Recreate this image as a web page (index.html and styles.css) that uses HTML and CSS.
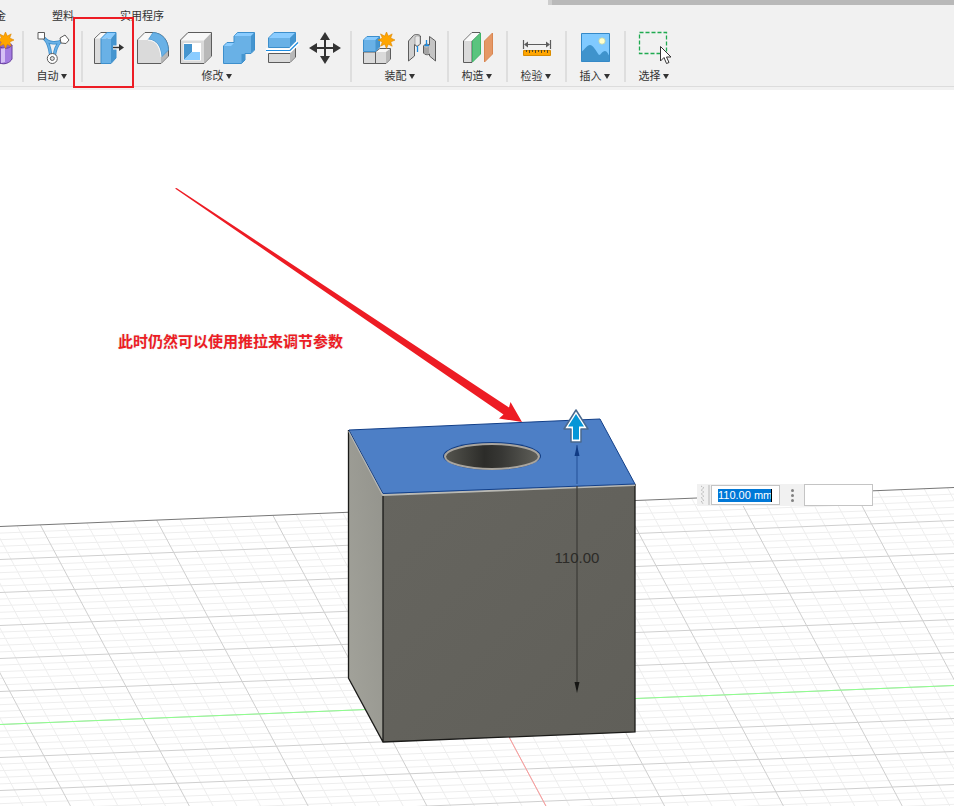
FILE: index.html
```
<!DOCTYPE html>
<html lang="zh-CN">
<head>
  <meta charset="UTF-8" />
  <meta name="viewport" content="width=device-width, initial-scale=1.0"/>
  <title>推拉</title>
  <link rel="stylesheet" href="styles.css">
</head>
<body>
  <header class="ribbon">
    <div class="doc-strip"></div>
    <nav class="tabs">
      <button class="tab">金</button>
      <button class="tab">塑料</button>
      <button class="tab">实用程序</button>
    </nav>

    <div class="toolbar">
      <!-- Create (scrolled out on the left) -->
      <div class="group group-first">
        <div class="tools">
          <button class="tool" aria-label="创建造型">
            <svg viewBox="0 0 32 32">
              <path d="M8 12 L20 8 L32 12 V27 L25 32 H10 L4 27 Z" fill="#8f66c4"/>
              <path d="M20 15 C27 18 31 15 32 13 V27 C30 31 24 33 20 31 Z" fill="#a37be0" stroke="#67409c"/>
              <path d="M21 17 L25 16 V30 L21 31 Z" fill="#d5c0f5"/>
              <path d="M25.500 0 L27.300 4.100 L31.200 1.900 L29.700 6 L34 8 L29.700 10 L31.200 14.200 L27.300 12.200 L25.500 16.500 L23.700 12.200 L19.500 14.200 L21.400 10 L17 8 L21.400 6 L19.500 1.900 L23.700 4.100 Z" fill="#ffa500" stroke="#dc8700" stroke-width=".6"/>
            </svg>
          </button>
        </div>
      </div>

      <!-- Automate -->
      <div class="group">
        <div class="tools">
          <button class="tool" aria-label="自动建模">
            <svg viewBox="0 0 32 32">
              <path d="M7 6 C11 12 21 12 26 8 M8 7 C13 13 13 19 14 25 M25 8 C19 13 18 19 17 25" fill="none" stroke="#3d8fcc" stroke-width="3.400"/>
              <path d="M7 6 C11 12 21 12 26 8 M8 7 C13 13 13 19 14 25 M25 8 C19 13 18 19 17 25" fill="none" stroke="#69b1e6" stroke-width="1.800"/>
              <path d="M1 .5 H7.500 V7 H1 Z M23 6 L28 3 L32 8 L29 11.500 L24 11 Z" fill="#fff" stroke="#5c5c5c"/>
              <circle cx="15.300" cy="26.500" r="5" fill="#fff" stroke="#5c5c5c"/>
              <circle cx="15.300" cy="26.500" r="2" fill="#ddd" stroke="#5c5c5c"/>
            </svg>
          </button>
        </div>
        <button class="menu">自动<i class="caret"></i></button>
      </div>

      <!-- Modify -->
      <div class="group group-wide">
        <div class="tools">
          <button class="tool" aria-label="推拉">
            <svg viewBox="0 0 32 32">
              <path d="M.5 6.500 L7 .5 H13 V31.500 H.5 Z" fill="#dcdcdc" stroke="#5c5c5c"/>
              <path d="M1 6.500 L7 1 H13 L8 6.500 Z" fill="#fafafa"/>
              <path d="M7 6.500 H17 V31.500 H7 Z" fill="#69b1e6"/>
              <path d="M7 6.500 L13 .5 H22 L17 6.500 Z" fill="#8accff"/>
              <path d="M17 6.500 L22 .5 V26 L17 31.500 Z" fill="#4595cf"/>
              <path d="M7 31.500 V6.500 L13 .5 H22 V26 L17 31.500 Z" fill="none" stroke="#3d8fcc"/>
              <path d="M19 15.500 H25" stroke="#fff" stroke-width="4"/>
              <path d="M19 15.500 H26" stroke="#333" stroke-width="1.500"/>
              <path d="M25 12 L30 15.500 L25 19 Z" fill="#333"/>
            </svg>
            <span class="mark"></span>
          </button>
          <button class="tool" aria-label="圆角">
            <svg viewBox="0 0 32 32">
              <path d="M.5 8 L8 .5 H15 C26 1 31 8 31.500 18 V24 L24 31.500 H.5 Z" fill="#dadada" stroke="#5c5c5c"/>
              <path d="M1 8 L8 1 H17 L10 8 Z" fill="#f8f8f8"/>
              <path d="M24 25 L31 18 V24 L24 31 Z" fill="#b8b8b8"/>
              <path d="M11.500 7.500 L16 .5 C26 1 31 9 31.500 18 L24.500 25 C24 14 20 8 11.500 7.500 Z" fill="#69b1e6" stroke="#3d8fcc" stroke-width=".7"/>
              <path d="M11 8 C19 8.500 23 14 24 25" fill="none" stroke="#fff"/>
            </svg>
          </button>
          <button class="tool" aria-label="抽壳">
            <svg viewBox="0 0 32 32">
              <path d="M.5 8 L8 .5 H31.500 V24 L24 31.500 H.5 Z" fill="#dadada" stroke="#5c5c5c"/>
              <path d="M1 8.500 L8.500 1 H31 L24 8.500 Z" fill="#f8f8f8"/>
              <path d="M24 8.500 L31 1.500 V24 L24 31 Z" fill="#b8b8b8"/>
              <path d="M3.500 11 H21 V28.500 H3.500 Z" fill="#fff"/>
              <path d="M4 12 H12 V20 L4 28 Z" fill="#4595cf"/>
              <path d="M4 28 L12 20 H20 V28 Z" fill="#8accff"/>
            </svg>
          </button>
          <button class="tool" aria-label="合并">
            <svg viewBox="0 0 32 32">
              <path d="M.5 14 L4 10.500 H11 V4 L14.500 .5 H31.500 V18 L28 21.500 H22 V28 L18.500 31.500 H.5 Z" fill="#69b1e6" stroke="#3d8fcc"/>
              <path d="M11 4 L14.500 1 H31 L28 4 Z M1 14 L4 11 H11 L8 14 Z" fill="#8accff"/>
              <path d="M28 4 L31 1 V18 L28 21 Z M18.500 22 H22 V28 L18.500 31 Z" fill="#4595cf"/>
            </svg>
          </button>
          <button class="tool" aria-label="分割实体">
            <svg viewBox="0 0 32 32">
              <path d="M2.500 6 L8 .5 H29.500 V10 L24 15.500 H2.500 Z" fill="#69b1e6" stroke="#3d8fcc"/>
              <path d="M3 6 L8 1 H29 L24 6 Z" fill="#8accff"/>
              <path d="M24 6 L29 1 V10 L24 15 Z" fill="#4595cf"/>
              <path d="M2.500 21.500 H24 L29.500 16 V25 L24 30.500 H2.500 Z" fill="#dadada" stroke="#5c5c5c"/>
              <path d="M24 21.500 L29 17 V25 L24 30 Z" fill="#b8b8b8"/>
              <path d="M0 18.500 H24 L32 10.500" fill="none" stroke="#fff" stroke-width="4.500"/>
              <path d="M0 18.500 H24 L32 10.500" fill="none" stroke="#1b8be0" stroke-width="1.200"/>
            </svg>
          </button>
          <button class="tool" aria-label="移动">
            <svg viewBox="0 0 32 32">
              <path d="M16 6 V26 M6 16 H26" stroke="#333" stroke-width="2"/>
              <path d="M16 0 L21 8 H11 Z M16 32 L11 24 H21 Z M0 16 L8 11 V21 Z M32 16 L24 21 V11 Z" fill="#333"/>
            </svg>
          </button>
        </div>
        <button class="menu">修改<i class="caret"></i></button>
      </div>

      <!-- Assemble -->
      <div class="group group-wide">
        <div class="tools">
          <button class="tool" aria-label="新建零部件">
            <svg viewBox="0 0 32 32">
              <path d="M.5 20 H12.500 L17 16.500 H27.500 V27 L23 31.500 H.5 Z" fill="#dadada" stroke="#5c5c5c"/>
              <path d="M13 20 L17 17 H27 L23 20 Z" fill="#f8f8f8"/>
              <path d="M23 20 L27 17 V27 L23 31 Z" fill="#b8b8b8"/>
              <path d="M12.500 19 V31" stroke="#5c5c5c"/>
              <path d="M.5 8 L4 4.500 H16.500 V15 L12.500 19.500 H.5 Z" fill="#69b1e6" stroke="#3d8fcc"/>
              <path d="M1 8 L4 5 H16 L12.500 8 Z" fill="#8accff"/>
              <path d="M12.500 8 L16 5 V15 L12.500 19 Z" fill="#4595cf"/>
              <path d="M23.500 0 L25.300 4.100 L29.200 1.900 L27.700 6 L32 8 L27.700 10 L29.200 14.200 L25.300 12.200 L23.500 16.500 L21.700 12.200 L17.500 14.200 L19.400 10 L15 8 L19.400 6 L17.500 1.900 L21.700 4.100 Z" fill="#ffa500" stroke="#dc8700" stroke-width=".6"/>
            </svg>
          </button>
          <button class="tool" aria-label="联接">
            <svg viewBox="0 0 32 32">
              <path d="M2.500 9 L7 4 C8 2 13 2 14.500 4 V12 L11 14.500 L8.500 12.500 V24 L2.500 29 Z" fill="#d0d0d0" stroke="#5c5c5c"/>
              <path d="M9 5 C10 3.500 13 3.500 14 5 V12 L11 14 L9 12 Z" fill="#e8e8e8" stroke="#8a8a8a" stroke-width=".6"/>
              <path d="M29.500 29 L23.500 24 V22 C21 23.500 18.500 22.500 17.500 21 V14 C18.500 12 21 11.500 23.500 13 V4.500 L29.500 9 Z" fill="#c4c4c4" stroke="#5c5c5c"/>
              <path d="M18 14.500 C19 16 22 16 23 14.500 V21 C21 23 19 22 18 21 Z" fill="#a5a5a5"/>
              <path d="M11.500 14 V20 M20.500 8 V13.500 M18.500 13.500 H23" stroke="#1b8be0" stroke-width="1.300"/>
            </svg>
          </button>
        </div>
        <button class="menu">装配<i class="caret"></i></button>
      </div>

      <!-- Construct -->
      <div class="group">
        <div class="tools">
          <button class="tool" aria-label="偏移平面">
            <svg viewBox="0 0 32 32">
              <path d="M1.500 9 L10 .5 H18 L10 9 V30.500 H1.500 Z" fill="#dadada" stroke="#5c5c5c"/>
              <path d="M2 9 L10 1 H18 L10 9 Z" fill="#fafafa"/>
              <path d="M10.500 9 L18.500 1 V22 L10.500 30 Z" fill="#5ac47e" stroke="#3eb468"/>
              <path d="M22.500 9 L30.500 1 V22 L22.500 30 Z" fill="#e59866" stroke="#d98650"/>
            </svg>
          </button>
        </div>
        <button class="menu">构造<i class="caret"></i></button>
      </div>

      <!-- Inspect -->
      <div class="group">
        <div class="tools">
          <button class="tool" aria-label="测量">
            <svg viewBox="0 0 32 32">
              <path d="M2.500 8 V17 M29.500 8 V17 M5 12.500 H27" stroke="#5c5c5c" stroke-width="1.200"/>
              <path d="M3 12.500 L7 9.500 V15.500 Z M29 12.500 L25 9.500 V15.500 Z" fill="#5c5c5c"/>
              <path d="M2.500 18.500 H29.500 V23.500 H2.500 Z" fill="#ffa500" stroke="#d98c00"/>
              <path d="M5.500 18 V20 M8.500 18 V21 M11.500 18 V20 M14.500 18 V21 M17.500 18 V20 M20.500 18 V21 M23.500 18 V20 M26.500 18 V21" stroke="#5c4a20"/>
            </svg>
          </button>
        </div>
        <button class="menu">检验<i class="caret"></i></button>
      </div>

      <!-- Insert -->
      <div class="group">
        <div class="tools">
          <button class="tool" aria-label="画布">
            <svg viewBox="0 0 32 32">
              <path d="M1.500 1.500 H29.500 V29.500 H1.500 Z" fill="#80caff"/>
              <path d="M1.500 20 C5 17 7 13 10 13 C13 13 16 19 19 23 C21 23 22 19 25 19 C27 19 28 22 29.500 24 V29.500 H1.500 Z" fill="#3f93cc"/>
              <path d="M1.500 1.500 H29.500 V29.500 H1.500 Z" fill="none" stroke="#3589c7"/>
              <circle cx="22" cy="9" r="3.200" fill="#ffffcc" stroke="#b8cfa0" stroke-width=".7"/>
            </svg>
          </button>
        </div>
        <button class="menu">插入<i class="caret"></i></button>
      </div>

      <!-- Select -->
      <div class="group">
        <div class="tools">
          <button class="tool" aria-label="选择">
            <svg viewBox="0 0 32 32">
              <path d="M.5 .5 H27.500 V21.500 H.5 Z" fill="none" stroke="#1faa50" stroke-width="1.300" stroke-dasharray="4 2"/>
              <path d="M21.500 14.500 V29 L25 25.500 L27.500 31.500 L30 30.500 L27.500 25 H32 Z" fill="#fff" stroke="#333"/>
            </svg>
          </button>
        </div>
        <button class="menu">选择<i class="caret"></i></button>
      </div>
    </div>
  </header>

  <main class="viewport">
    <svg class="scene" viewBox="0 90 954 716">
      <defs>
        <clipPath id="floor"><path d="M0 526.500 L954 487.500 V806 H0 Z"/></clipPath>
        <linearGradient id="sideFill" x1="0" y1="1" x2="1" y2="0">
          <stop offset="0" stop-color="#a3a39b"/>
          <stop offset="1" stop-color="#93938c"/>
        </linearGradient>
        <linearGradient id="frontFill" x1="0" y1="0" x2="1" y2="1">
          <stop offset="0" stop-color="#66655f"/>
          <stop offset="1" stop-color="#605f59"/>
        </linearGradient>
        <linearGradient id="holeFill">
          <stop offset="0" stop-color="#55554f"/>
          <stop offset=".42" stop-color="#2c2c29"/>
          <stop offset=".6" stop-color="#373734"/>
          <stop offset="1" stop-color="#60605a"/>
        </linearGradient>
      </defs>

      <!-- Ground grid -->
      <g clip-path="url(#floor)">
        <path id="gridMinor" class="grid-minor"/>
        <path id="gridMajor" class="grid-major"/>
      </g>
      <path class="horizon" d="M0 526.500 L954 487.500"/>
      <path class="axis-y" d="M0 724.500 L954 685.500"/>
      <path class="axis-x" d="M509 737 L546 806"/>

      <!-- Box -->
      <path d="M349 430 L383 494 V742 L349 678 Z" fill="url(#sideFill)"/>
      <path d="M383 494 L635 484 V732 L383 742 Z" fill="url(#frontFill)"/>
      <path d="M349 430 L600 419 L635 484 L383 494 Z" fill="#4d7fc6"/>
      <path class="edge" d="M348.500 430 V678 L383 742 L635 732 V484 M383 495 V742"/>
      <path class="edge-light" d="M349 431 L383 495 L635 485"/>
      <path class="edge-blue" d="M383 493.500 L635 484 L600 419 L349 430 L383 493.500"/>
      <ellipse cx="492" cy="456" rx="49" ry="14" fill="#123c80"/>
      <ellipse cx="492" cy="456.500" rx="47" ry="12.500" fill="url(#holeFill)" stroke="#a9a59e" stroke-width="2"/>

      <!-- Dimension -->
      <path d="M577 445 V484" stroke="#2b589f" stroke-width="1.200"/>
      <path d="M577 445 L579.500 456 H574.500 Z" fill="#103b85"/>
      <path d="M577 486 V684" stroke="#3c3b37" stroke-width="1.200"/>
      <path d="M577 693 L579.500 682 H574.500 Z" fill="#161614"/>
      <text class="dimension" x="577" y="563">110.00</text>
      <path d="M576 410 L588 429 H581 V442 H571 V429 H564 Z" fill="#fff" stroke="#49698f" stroke-width="1.500" stroke-linejoin="round"/>
      <path d="M576 414 L584 426.500 H579 V439.500 H573 V426.500 H568 Z" fill="#0696d7"/>

      <!-- Callout arrow -->
      <path d="M175 188.500 L176.500 188 L509 407.500 L510.500 402 L522 422 L499 418.500 L503.500 414.500 Z" fill="#ed1c24"/>
    </svg>

    <p class="note">此时仍然可以使用推拉来调节参数</p>

    <form class="value-bar">
      <svg class="grip" viewBox="0 0 5 20">
        <path d="M1 1 L4 3 L1 5 L4 7 L1 9 L4 11 L1 13 L4 15 L1 17 L4 19" fill="none" stroke="#b8b8b8" stroke-dasharray="1.500 1"/>
      </svg>
      <span class="bar"></span>
      <label class="value-box">
        <input class="value" type="text" value="110.00 mm" aria-label="距离" />
      </label>
      <button class="more" type="button" aria-label="更多">
        <i></i><i></i><i></i>
      </button>
      <input class="expression" type="text" aria-label="表达式" />
    </form>
  </main>

  <script>
    // the grid runs along two directions, every fifth line is a major one
    const stepX = 23.26, stepY = 6.6, slope = -39 / 954, lean = 0.53;
    let minor = "", major = "";

    for (let n = -22; n < 42; n++) {
      const x = 40.3 + stepX * n;
      const y = 526.5 + slope * x;
      const line = `M${x} ${y} L${x + lean * 340} ${y + 340} `;
      if (n % 5 === 0) major += line; else minor += line;
    }
    for (let k = 1; k < 50; k++) {
      const y = 526.5 + stepY * k;
      const line = `M0 ${y} L954 ${y - 39} `;
      if (k % 5 === 0) major += line; else minor += line;
    }

    document.getElementById("gridMinor").setAttribute("d", minor);
    document.getElementById("gridMajor").setAttribute("d", major);
  </script>
</body>
</html>
```
FILE: styles.css
```
* {
  box-sizing: border-box;
}
body {
  margin: 0;
  background: #fff;
  color: #333;
  font-family: "Liberation Sans", "Noto Sans CJK SC", sans-serif;
  font-size: 11px;
  overflow-x: hidden;
}
button {
  padding: 0;
  border: none;
  background: none;
  color: inherit;
  font: inherit;
}
.ribbon {
  display: flex;
  flex-direction: column;
  background: #f1f1f1;
}
.doc-strip {
  width: 406px;
  height: 5px;
  align-self: flex-end;
  background: #b9b9b9;
  border-left: 4px solid #cdcdcd;
}
.tabs {
  display: flex;
  gap: 46px;
  height: 22px;
  margin-left: -5px;
}
.tab {
  line-height: 22px;
  white-space: nowrap;
}
.toolbar {
  display: flex;
  padding: 4px 0;
  border-bottom: 1px solid #dcdcdc;
  margin-bottom: 3px;
}
.group {
  display: flex;
  flex-direction: column;
  align-items: center;
  height: 51px;
  padding: 1px 10px 0;
  border-left: 2px solid #dedede;
  min-width: 59px;
}
.group-wide {
  padding: 1px 9px 0 11px;
}
.group-first {
  width: 22px;
  min-width: 0;
  align-items: flex-end;
  border: none;
}
.tools {
  display: flex;
  gap: 11px;
}
.tool {
  position: relative;
  width: 32px;
  height: 32px;
}
.tool svg {
  display: block;
  width: 32px;
  height: 32px;
  overflow: visible;
}
/* red frame round the push/pull tool */
.mark {
  position: absolute;
  z-index: 1;
  top: -15px;
  right: -8px;
  bottom: -24px;
  left: -21px;
  border: 2px solid #ed1c24;
}
.menu {
  display: flex;
  align-items: center;
  gap: 2px;
  line-height: 16px;
  margin-top: 4px;
  padding-right: 2px;
  white-space: nowrap;
}
.caret {
  border: 3px solid transparent;
  border-top: 5px solid #333;
  border-bottom: none;
}

.viewport {
  position: relative;
}
.scene {
  display: block;
  width: 100%;
}
.grid-minor, .grid-major, .horizon, .axis-x, .axis-y {
  fill: none;
}
.grid-minor {
  stroke: #eee;
}
.grid-major {
  stroke: #cfcfcf;
}
.horizon {
  stroke: #777;
}
.axis-y {
  stroke: #8cff8c;
}
.axis-x {
  stroke: #ff9a9a;
}
.edge, .edge-light, .edge-blue {
  fill: none;
}
.edge {
  stroke: #1a1a18;
  stroke-width: 1.3;
}
.edge-light {
  stroke: #b9b9b4;
  stroke-width: 2;
}
.edge-blue {
  stroke: #123f88;
}
.dimension {
  font-size: 15px;
  fill: #2c2b28;
  text-anchor: middle;
}
.note {
  position: absolute;
  top: 240px;
  left: 118px;
  margin: 0;
  font-size: 15px;
  line-height: 24px;
  font-weight: bold;
  color: #ed1c24;
  text-shadow: 0 0 2px #ddd;
}
.value-bar {
  position: absolute;
  top: 394px;
  left: 697px;
  display: flex;
  align-items: center;
  height: 22px;
  background: #f1f1f1;
}
.grip {
  width: 5px;
  height: 20px;
  margin: 0 3px;
}
.bar {
  width: 2px;
  height: 20px;
  margin-right: 1px;
  background: #d4d4d4;
}
.value-box {
  display: flex;
  align-items: center;
  width: 69px;
  height: 20px;
  padding-left: 6px;
  background: #fff;
  border: 1px solid #c4c4c4;
}
.value {
  width: 54px;
  height: 13px;
  padding: 0;
  border: none;
  border-right: 1px solid #000;
  background: #0078d7;
  color: #fff;
  font-family: "Liberation Sans", sans-serif;
  font-size: 11px;
}
.more {
  display: flex;
  flex-direction: column;
  align-items: center;
  gap: 2px;
  width: 24px;
}
.more i {
  width: 3px;
  height: 3px;
  border-radius: 50%;
  background: #808080;
}
.expression {
  width: 69px;
  height: 22px;
  border: 1px solid #c4c4c4;
  background: #fff;
}
```
